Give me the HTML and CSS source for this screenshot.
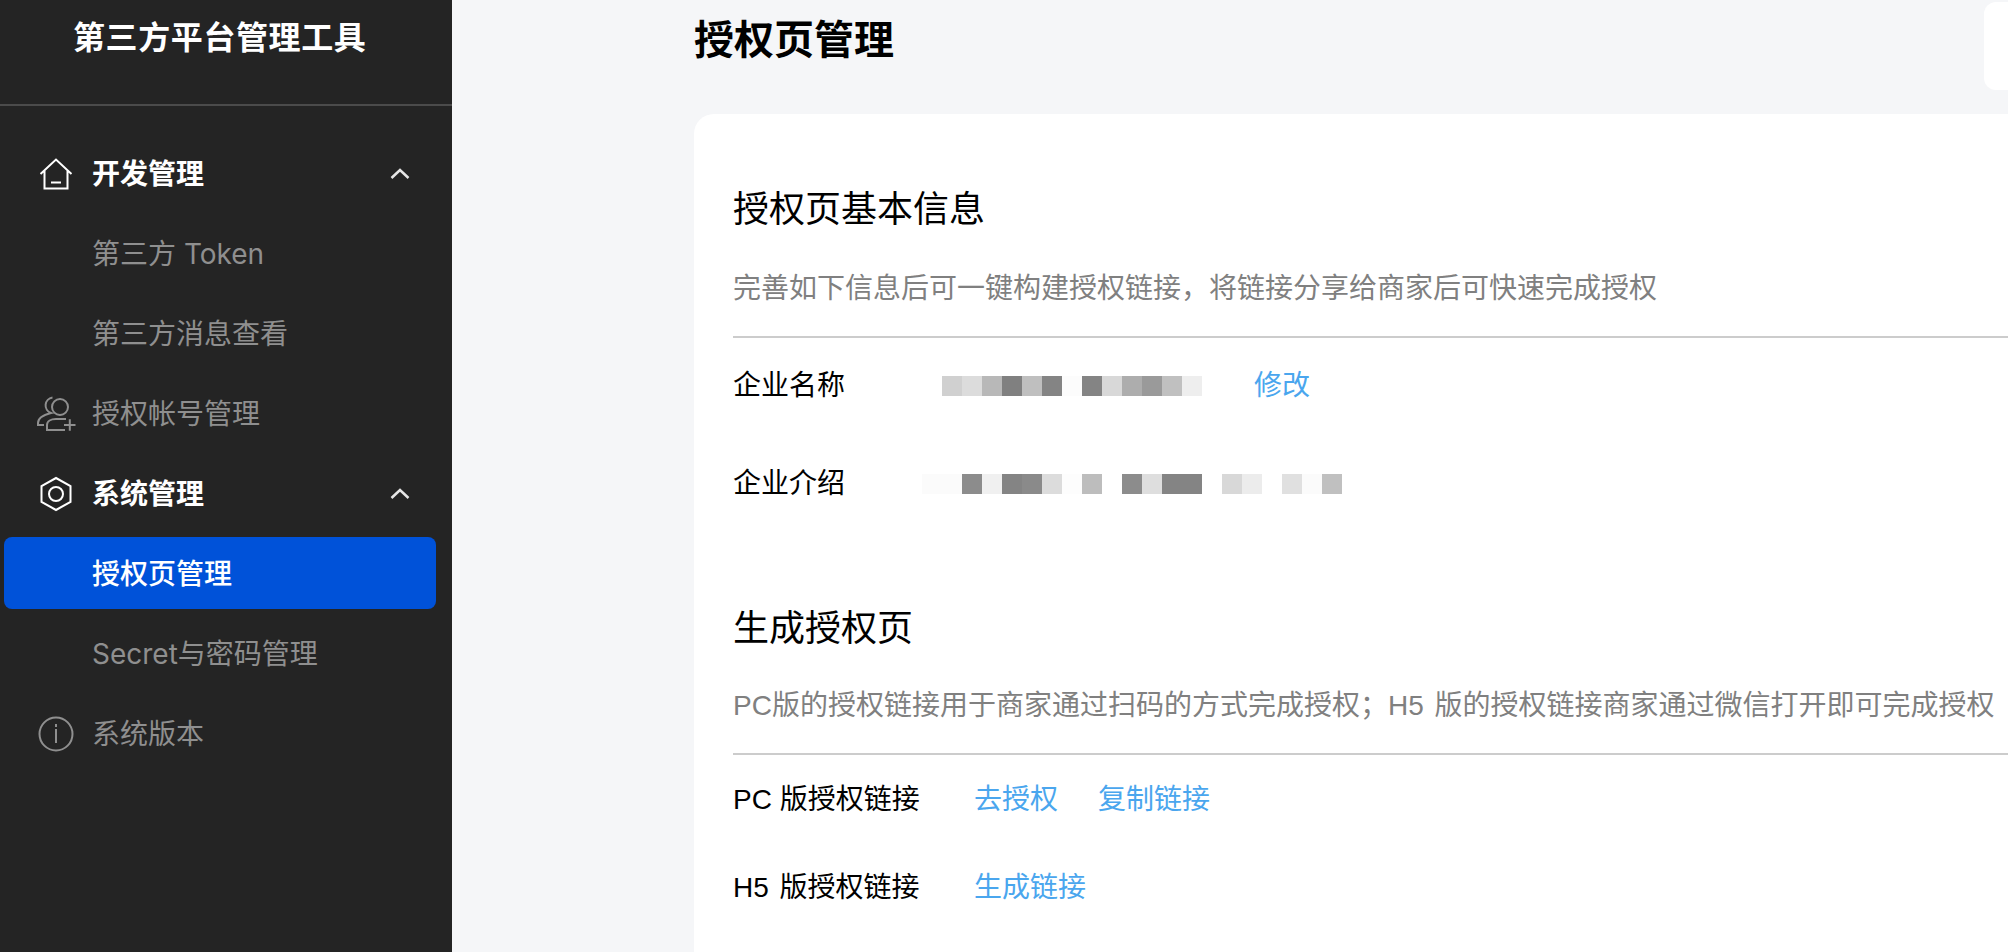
FILE: index.html
```html
<!DOCTYPE html>
<html lang="zh-CN">
<head>
  <meta charset="UTF-8">
  <meta name="viewport" content="width=device-width, initial-scale=1.0">
  <title>授权页管理</title>
  <link rel="stylesheet" href="styles.css">
</head>
<body>

  <div class="layout">
    <aside class="sidebar">
      <div class="brand">第三方平台管理工具</div>

      <nav class="menu">
        <a class="menu-item group">
          <svg class="menu-icon" viewBox="0 0 40 40"><path d="M4.500 20 20 5.500 35.500 20M8.500 17v17.500h23V17M15 28.500h10"/></svg>
          <span>开发管理</span>
          <svg class="chevron" viewBox="0 0 20 12"><path d="M1.500 10 10 2l8.500 8"/></svg>
        </a>
        <a class="menu-item sub">第三方 Token</a>
        <a class="menu-item sub">第三方消息查看</a>
        <a class="menu-item">
          <svg class="menu-icon" viewBox="0 0 40 40"><circle cx="24" cy="13" r="8"/><path d="M16.500 3.500a8 8 0 0 0-1.500 15.500C7 21 2 24 2 29v2h6M29 36H11v-5c0-4 4-6 9-6h10M28 31h11.500M33.800 25.300v11.500"/></svg>
          <span>授权帐号管理</span>
        </a>
        <a class="menu-item group">
          <svg class="menu-icon" viewBox="0 0 40 40"><path d="M20 4 34.500 12v16L20 36 5.500 28V12z"/><circle cx="20" cy="20" r="7"/></svg>
          <span>系统管理</span>
          <svg class="chevron" viewBox="0 0 20 12"><path d="M1.500 10 10 2l8.500 8"/></svg>
        </a>
        <a class="menu-item sub active">授权页管理</a>
        <a class="menu-item sub">Secret与密码管理</a>
        <a class="menu-item">
          <svg class="menu-icon" viewBox="0 0 40 40"><circle cx="20" cy="20" r="16.500"/><path d="M20 15v14M20 10v3"/></svg>
          <span>系统版本</span>
        </a>
      </nav>
    </aside>

    <main class="content">
      <div class="page-head">
        <h1>授权页管理</h1>
        <div class="head-box"></div>
      </div>

      <div class="card">
        <section class="block">
          <h2>授权页基本信息</h2>
          <p class="desc">完善如下信息后可一键构建授权链接，将链接分享给商家后可快速完成授权</p>
          <div class="info-row">
            <span class="label">企业名称</span>
            <svg class="mosaic" width="280" height="20" shape-rendering="crispEdges">
              <rect x="20" width="20" height="20" fill="#d0d0d0"/>
              <rect x="40" width="20" height="20" fill="#dcdcdc"/>
              <rect x="60" width="20" height="20" fill="#b8b8b8"/>
              <rect x="80" width="20" height="20" fill="#808080"/>
              <rect x="100" width="20" height="20" fill="#bfbfbf"/>
              <rect x="120" width="20" height="20" fill="#848484"/>
              <rect x="140" width="20" height="20" fill="#fcfcfc"/>
              <rect x="160" width="20" height="20" fill="#848484"/>
              <rect x="180" width="20" height="20" fill="#d8d8d8"/>
              <rect x="200" width="20" height="20" fill="#adadad"/>
              <rect x="220" width="20" height="20" fill="#9a9a9a"/>
              <rect x="240" width="20" height="20" fill="#c0c0c0"/>
              <rect x="260" width="20" height="20" fill="#eeeeee"/>
            </svg>
            <a class="link edit">修改</a>
          </div>
          <div class="info-row second">
            <span class="label">企业介绍</span>
            <svg class="mosaic" width="420" height="20" shape-rendering="crispEdges">
              <rect width="40" height="20" fill="#fbfbfb"/>
              <rect x="40" width="20" height="20" fill="#8c8c8c"/>
              <rect x="60" width="20" height="20" fill="#f0f0f0"/>
              <rect x="80" width="20" height="20" fill="#848484"/>
              <rect x="100" width="20" height="20" fill="#8a8a8a"/>
              <rect x="120" width="20" height="20" fill="#dcdcdc"/>
              <rect x="140" width="20" height="20" fill="#fdfdfd"/>
              <rect x="160" width="20" height="20" fill="#bdbdbd"/>
              <rect x="200" width="20" height="20" fill="#8c8c8c"/>
              <rect x="220" width="20" height="20" fill="#dedede"/>
              <rect x="240" width="40" height="20" fill="#848484"/>
              <rect x="300" width="20" height="20" fill="#d8d8d8"/>
              <rect x="320" width="20" height="20" fill="#ececec"/>
              <rect x="360" width="20" height="20" fill="#e0e0e0"/>
              <rect x="380" width="20" height="20" fill="#fbfbfb"/>
              <rect x="400" width="20" height="20" fill="#c0c0c0"/>
            </svg>
          </div>
        </section>

        <section class="block block-links">
          <h2>生成授权页</h2>
          <p class="desc">PC版的授权链接用于商家通过扫码的方式完成授权；<span class="h5">H5 版</span>的授权链接商家通过微信打开即可完成授权</p>
          <div class="link-row">
            <span class="label">PC 版授权链接</span>
            <a class="link">去授权</a>
            <a class="link">复制链接</a>
          </div>
          <div class="link-row">
            <span class="label"><span class="h5">H5 版</span>授权链接</span>
            <a class="link">生成链接</a>
          </div>
        </section>
      </div>
    </main>
  </div>

</body>
</html>
```

FILE: styles.css
```css
html, body {
  height: 100%;
}
body {
  margin: 0;
  overflow: hidden;
  background-color: #f5f6f8;
  font-family: "Liberation Sans", "Noto Sans CJK SC", sans-serif;
  color: #000;
}
.layout {
  display: flex;
  height: 100%;
}

/* sidebar */
.sidebar {
  flex: 0 0 452px;
  background-color: #242424;
}
.brand {
  height: 88px;
  padding: 16px 0 0 73px;
  border-bottom: 2px solid #4b4b4b;
  font-family: "Inter", "Noto Sans CJK SC", sans-serif;
  font-size: 32px;
  line-height: 44px;
  font-weight: 700;
  letter-spacing: 0.6px;
  color: #fff;
}
.menu {
  display: flex;
  flex-direction: column;
  gap: 8px;
  padding: 31px 16px 0 4px;
}
.menu-item {
  position: relative;
  display: flex;
  align-items: center;
  box-sizing: border-box;
  height: 72px;
  padding: 0 0 2px 88px;
  border-radius: 8px;
  font-family: "Inter", "Noto Sans CJK SC", sans-serif;
  font-size: 28px;
  color: #8f8f8f;
}
.menu-item.group {
  color: #fff;
  font-weight: 700;
}
.menu-item.active {
  background-color: #0052d9;
  color: #fff;
  font-weight: 500;
}
.menu-icon {
  position: absolute;
  left: 32px;
  top: 17px;
  width: 40px;
  height: 40px;
  fill: none;
  stroke: currentColor;
  stroke-width: 2;
}
.chevron {
  position: absolute;
  left: 386px;
  top: 31px;
  width: 20px;
  height: 12px;
  fill: none;
  stroke: #e6e6e6;
  stroke-width: 2.500;
}

/* main area */
.content {
  display: flex;
  flex-direction: column;
  flex: 1;
  min-width: 0;
  padding-left: 242px;
}
.page-head {
  display: flex;
  align-items: center;
  justify-content: space-between;
  height: 88px;
  padding-top: 2px;
  margin-bottom: 24px;
}
h1 {
  margin: 0 0 12px;
  font-size: 40px;
  line-height: 48px;
  font-weight: 700;
}
.head-box {
  width: 24px;
  height: 88px;
  background-color: #fff;
  border-radius: 12px 0 0 12px;
}
.card {
  flex: 1;
  min-height: 0;
  padding: 72px 0 0 39px;
  background-color: #fff;
  border-radius: 20px 0 0 0;
}
h2 {
  margin: 0;
  font-size: 36px;
  line-height: 48px;
  font-weight: 400;
}
.desc {
  margin: 35px 0 0;
  padding-bottom: 27px;
  border-bottom: 2px solid #ccc;
  font-size: 28px;
  line-height: 40px;
  color: #808080;
  white-space: nowrap;
}
.block-links {
  margin-top: 99px;
}
.block-links .desc {
  margin-top: 33px;
}
.h5 {
  word-spacing: 3px;
}
.label {
  font-size: 28px;
  line-height: 44px;
}
.link {
  font-size: 28px;
  line-height: 44px;
  color: #4aa6ee;
}
.info-row {
  display: flex;
  align-items: center;
  margin-top: 26px;
}
.info-row .label {
  width: 189px;
}
.info-row.second {
  margin-top: 54px;
}
.mosaic {
  display: block;
}
.edit {
  margin-left: 52px;
}
.link-row {
  display: flex;
  align-items: center;
  gap: 40px;
  margin-top: 44px;
}
.desc + .link-row {
  margin-top: 23px;
}
.link-row .label {
  width: 201px;
}
```
